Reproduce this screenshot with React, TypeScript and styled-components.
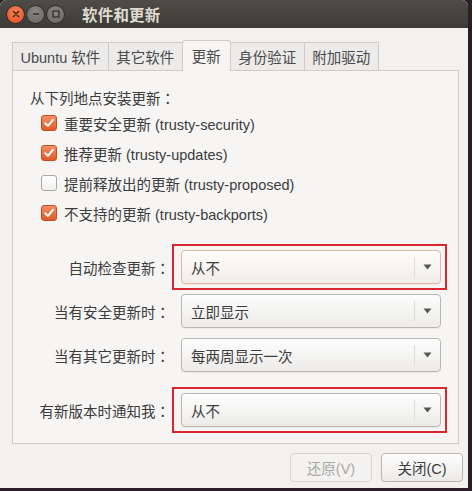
import React from 'react';
import styled, { createGlobalStyle, css } from 'styled-components';

const GlobalStyle = createGlobalStyle`
  html, body {
    margin: 0;
    padding: 0;
    background: #2d1d26;
  }
  body {
    font-family: 'Liberation Sans', 'Noto Sans CJK SC', sans-serif;
    font-size: 14.5px;
    color: #3c3c3c;
  }
`;

const Window = styled.div`
  width: 468px;
  height: 488px;
  display: flex;
  flex-direction: column;
  background: #f2f1f0;
  border-radius: 6px 6px 0 0;
  overflow: hidden;
  box-sizing: border-box;
`;

const TitleBar = styled.div`
  height: 28px;
  flex-shrink: 0;
  display: flex;
  align-items: center;
  padding-left: 6px;
  background: linear-gradient(#4d4c47, #3c3b37);
`;

const WinButtons = styled.div`
  display: flex;
  gap: 1px;
  margin-right: 17px;
`;

const WinButton = styled.div<{ $close?: boolean }>`
  width: 17px;
  height: 17px;
  border-radius: 50%;
  display: flex;
  align-items: center;
  justify-content: center;
  border: 1px solid #2f2e2b;
  background: ${(p) =>
    p.$close
      ? 'radial-gradient(circle at 50% 35%, #f8875d, #e0471c)'
      : 'radial-gradient(circle at 50% 35%, #8a8884, #66645f)'};
`;

const Title = styled.div`
  color: #dfdbd2;
  font-weight: bold;
  font-size: 15.5px;
  letter-spacing: 0.2px;
`;

const Body = styled.div`
  flex: 1;
  display: flex;
  flex-direction: column;
  padding: 12px 5px 6px 12px;
`;

const TabStrip = styled.div`
  display: flex;
  align-items: flex-end;
  height: 30px;
  position: relative;
  z-index: 1;
`;

const Tab = styled.div<{ $active?: boolean }>`
  height: 28px;
  box-sizing: border-box;
  padding: 0 7.5px;
  display: flex;
  align-items: center;
  border: 1px solid #cfccc7;
  border-bottom: none;
  margin-left: -1px;
  background: #ecebe9;
  color: #4a4a4a;
  white-space: nowrap;

  &:first-child {
    margin-left: 0;
  }

  ${(p) =>
    p.$active &&
    css`
      height: 31px;
      margin-bottom: -1px;
      padding: 0 9px 1px;
      background: #f6f5f4;
      border-radius: 3px 3px 0 0;
      position: relative;
      z-index: 2;
    `}
`;

const Panel = styled.div`
  width: 447px;
  height: 374px;
  box-sizing: border-box;
  margin-right: 4px;
  border: 1px solid #cfccc7;
  background: #f6f5f4;
  padding: 16px 17px 0 17px;
  display: flex;
  flex-direction: column;
`;

const Heading = styled.div`
  height: 21px;
  line-height: 21px;
`;

// full-width colon, centred in its cell as in the GTK rendering
const Colon = styled.span`
  font-family: 'Noto Sans CJK TC', sans-serif;
`;

const CheckList = styled.div`
  display: flex;
  flex-direction: column;
  padding-left: 11px;
`;

const CheckRow = styled.label`
  height: 30px;
  display: flex;
  align-items: center;
  gap: 7px;
`;

const Box = styled.span<{ $checked?: boolean }>`
  width: 16px;
  height: 16px;
  box-sizing: border-box;
  border-radius: 3px;
  display: flex;
  align-items: center;
  justify-content: center;
  ${(p) =>
    p.$checked
      ? css`
          background: linear-gradient(#f29065, #df5b2a);
          border: 1px solid #c24f1f;
        `
      : css`
          background: linear-gradient(#ffffff, #f1f0ef);
          border: 1px solid #aaa8a4;
        `}
`;

const Settings = styled.div`
  margin-top: 22px;
  display: grid;
  grid-template-columns: 140px 260px;
  column-gap: 11px;
  row-gap: 10px;
  align-items: center;
`;

const Label = styled.div<{ $gap?: boolean }>`
  text-align: right;
  white-space: nowrap;
  margin-top: ${(p) => (p.$gap ? '11px' : '0')};
`;

const Highlight = styled.div<{ $gap?: boolean }>`
  border: 2px solid #dc262d;
  padding: 4px 4px 4px 7px;
  margin: ${(p) => (p.$gap ? '5px' : '-6px')} -6px -6px -9px;
`;

const Combo = styled.div<{ $focus?: boolean }>`
  height: 34px;
  box-sizing: border-box;
  border-radius: 4px;
  border: 1px solid ${(p) => (p.$focus ? '#e6b59c' : '#b9b6b1')};
  background: ${(p) =>
    p.$focus ? 'linear-gradient(#fefcfb, #f1ece9)' : 'linear-gradient(#fdfdfd, #ecebe9)'};
  box-shadow: inset 0 1px 0 #ffffff, 0 1px 0 rgba(0, 0, 0, 0.04);
  display: flex;
  align-items: center;
`;

const ComboText = styled.span`
  flex: 1;
  padding-left: 9px;
`;

const ComboArrow = styled.span`
  width: 25px;
  align-self: stretch;
  margin: 6px 0;
  border-left: 1px solid #dcdad6;
  display: flex;
  align-items: center;
  justify-content: center;
`;

const ButtonRow = styled.div`
  display: flex;
  justify-content: flex-end;
  gap: 9px;
  margin-top: 9px;
`;

const Button = styled.div<{ $disabled?: boolean }>`
  width: 82px;
  height: 29px;
  box-sizing: border-box;
  border-radius: 4px;
  display: flex;
  align-items: center;
  justify-content: center;
  ${(p) =>
    p.$disabled
      ? css`
          border: 1px solid #d7d5d1;
          background: #f3f2f1;
          color: #aaa9a6;
        `
      : css`
          border: 1px solid #b9b6b1;
          background: linear-gradient(#fdfdfd, #ebeae8);
          color: #3c3c3c;
          box-shadow: inset 0 1px 0 #ffffff;
        `}
`;

const Check = () => (
  <svg width="12" height="12" viewBox="0 0 12 12">
    <path d="M2.2 6.2 L4.9 8.9 L9.9 2.8" fill="none" stroke="#ffffff" strokeWidth="2" strokeLinecap="round" strokeLinejoin="round" />
  </svg>
);

const Arrow = () => (
  <svg width="9" height="6" viewBox="0 0 9 6">
    <path d="M0.5 0.5 H8.5 L4.5 5.5 Z" fill="#555553" />
  </svg>
);

const CloseGlyph = () => (
  <svg width="8" height="8" viewBox="0 0 8 8">
    <path d="M1.5 1.5 L6.5 6.5 M6.5 1.5 L1.5 6.5" stroke="#3b1a0e" strokeWidth="1.4" strokeLinecap="round" />
  </svg>
);

const MinGlyph = () => (
  <svg width="8" height="8" viewBox="0 0 8 8">
    <path d="M1 4 H7" stroke="#2e2d2a" strokeWidth="1.6" />
  </svg>
);

const MaxGlyph = () => (
  <svg width="8" height="8" viewBox="0 0 8 8">
    <rect x="1" y="1" width="6" height="6" fill="none" stroke="#2e2d2a" strokeWidth="1.3" />
  </svg>
);

const sources = [
  { text: '重要安全更新 (trusty-security)', checked: true },
  { text: '推荐更新 (trusty-updates)', checked: true },
  { text: '提前释放出的更新 (trusty-proposed)', checked: false },
  { text: '不支持的更新 (trusty-backports)', checked: true },
];

const App: React.FC = () => {
  return (
    <>
      <GlobalStyle />
      <Window>
        <TitleBar>
          <WinButtons>
            <WinButton $close>
              <CloseGlyph />
            </WinButton>
            <WinButton>
              <MinGlyph />
            </WinButton>
            <WinButton>
              <MaxGlyph />
            </WinButton>
          </WinButtons>
          <Title>软件和更新</Title>
        </TitleBar>

        <Body>
          <TabStrip>
            <Tab>Ubuntu 软件</Tab>
            <Tab>其它软件</Tab>
            <Tab $active>更新</Tab>
            <Tab>身份验证</Tab>
            <Tab>附加驱动</Tab>
          </TabStrip>

          <Panel>
            <Heading>
              从下列地点安装更新<Colon>：</Colon>
            </Heading>
            <CheckList>
              {sources.map((s) => (
                <CheckRow key={s.text}>
                  <Box $checked={s.checked}>{s.checked && <Check />}</Box>
                  {s.text}
                </CheckRow>
              ))}
            </CheckList>

            <Settings>
              <Label>
                自动检查更新<Colon>：</Colon>
              </Label>
              <Highlight>
                <Combo $focus>
                  <ComboText>从不</ComboText>
                  <ComboArrow>
                    <Arrow />
                  </ComboArrow>
                </Combo>
              </Highlight>

              <Label>
                当有安全更新时<Colon>：</Colon>
              </Label>
              <Combo>
                <ComboText>立即显示</ComboText>
                <ComboArrow>
                  <Arrow />
                </ComboArrow>
              </Combo>

              <Label>
                当有其它更新时<Colon>：</Colon>
              </Label>
              <Combo>
                <ComboText>每两周显示一次</ComboText>
                <ComboArrow>
                  <Arrow />
                </ComboArrow>
              </Combo>

              <Label $gap>
                有新版本时通知我<Colon>：</Colon>
              </Label>
              <Highlight $gap>
                <Combo>
                  <ComboText>从不</ComboText>
                  <ComboArrow>
                    <Arrow />
                  </ComboArrow>
                </Combo>
              </Highlight>
            </Settings>
          </Panel>

          <ButtonRow>
            <Button $disabled>还原(V)</Button>
            <Button>关闭(C)</Button>
          </ButtonRow>
        </Body>
      </Window>
    </>
  );
};

export default App;
